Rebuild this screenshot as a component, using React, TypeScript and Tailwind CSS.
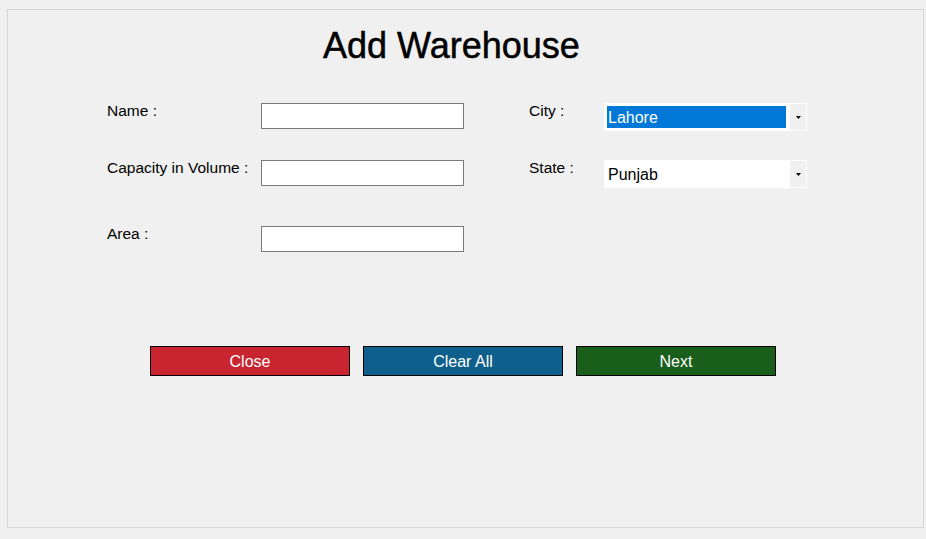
import React from "react";

function TextBox() {
  return <div className="w-[203px] h-[26px] bg-white border border-[#7a7a7a]" />;
}

function Combo({ value, selected }: { value: string; selected?: boolean }) {
  return (
    <div className="w-[203px] h-[28px] bg-white p-px flex">
      <div className="flex-1 p-[2px] flex">
        <div
          className={
            "flex-1 flex items-center pl-[1px] pt-[2px] text-[16px] leading-[18px] " +
            (selected ? "bg-[#0078d7] text-white" : "text-black")
          }
        >
          {value}
        </div>
      </div>
      <div className="w-[16px] ml-[2px] bg-[#f0f0f0] flex items-center justify-center">
        <svg width="5" height="3" viewBox="0 0 5 3">
          <path d="M0 0H5L2.5 3Z" fill="#000" />
        </svg>
      </div>
    </div>
  );
}

function Label({ children, w }: { children: React.ReactNode; w: string }) {
  return <div className={w + " text-[15.5px] leading-[16px] text-black"}>{children}</div>;
}

export default function App() {
  return (
    <div
      className="w-[926px] h-[539px] bg-[#f0f0f0] pt-[9px] pl-[7px]"
      style={{ fontFamily: '"Liberation Sans", Arial, sans-serif' }}
    >
      <div className="w-[917px] h-[519px] border border-[#d7d7d7] flex flex-col">
        <div className="pt-[16px] pl-[315px] text-[36px] leading-[40px] text-black [-webkit-text-stroke:0.5px_black]">
          Add Warehouse
        </div>
        <div className="mt-[37px] pl-[99px] flex">
          <div className="flex flex-col">
            <div className="flex items-start">
              <Label w="w-[154px]">Name :</Label>
              <TextBox />
            </div>
            <div className="flex items-start mt-[31px]">
              <Label w="w-[154px]">Capacity in Volume :</Label>
              <TextBox />
            </div>
            <div className="flex items-start mt-[40px]">
              <Label w="w-[154px]">Area :</Label>
              <TextBox />
            </div>
          </div>
          <div className="flex flex-col ml-[65px]">
            <div className="flex items-start">
              <Label w="w-[75px]">City :</Label>
              <Combo value="Lahore" selected />
            </div>
            <div className="flex items-start mt-[29px]">
              <Label w="w-[75px]">State :</Label>
              <Combo value="Punjab" />
            </div>
          </div>
        </div>
        <div className="mt-[94px] pl-[142px] flex gap-[13px]">
          <button className="w-[200px] h-[30px] pt-[2px] bg-[#c82531] border border-black text-white text-[16px] leading-[18px]">
            Close
          </button>
          <button className="w-[200px] h-[30px] pt-[2px] bg-[#0e5f8b] border border-black text-white text-[16px] leading-[18px]">
            Clear All
          </button>
          <button className="w-[200px] h-[30px] pt-[2px] bg-[#1a5e1b] border border-black text-white text-[16px] leading-[18px]">
            Next
          </button>
        </div>
      </div>
    </div>
  );
}
